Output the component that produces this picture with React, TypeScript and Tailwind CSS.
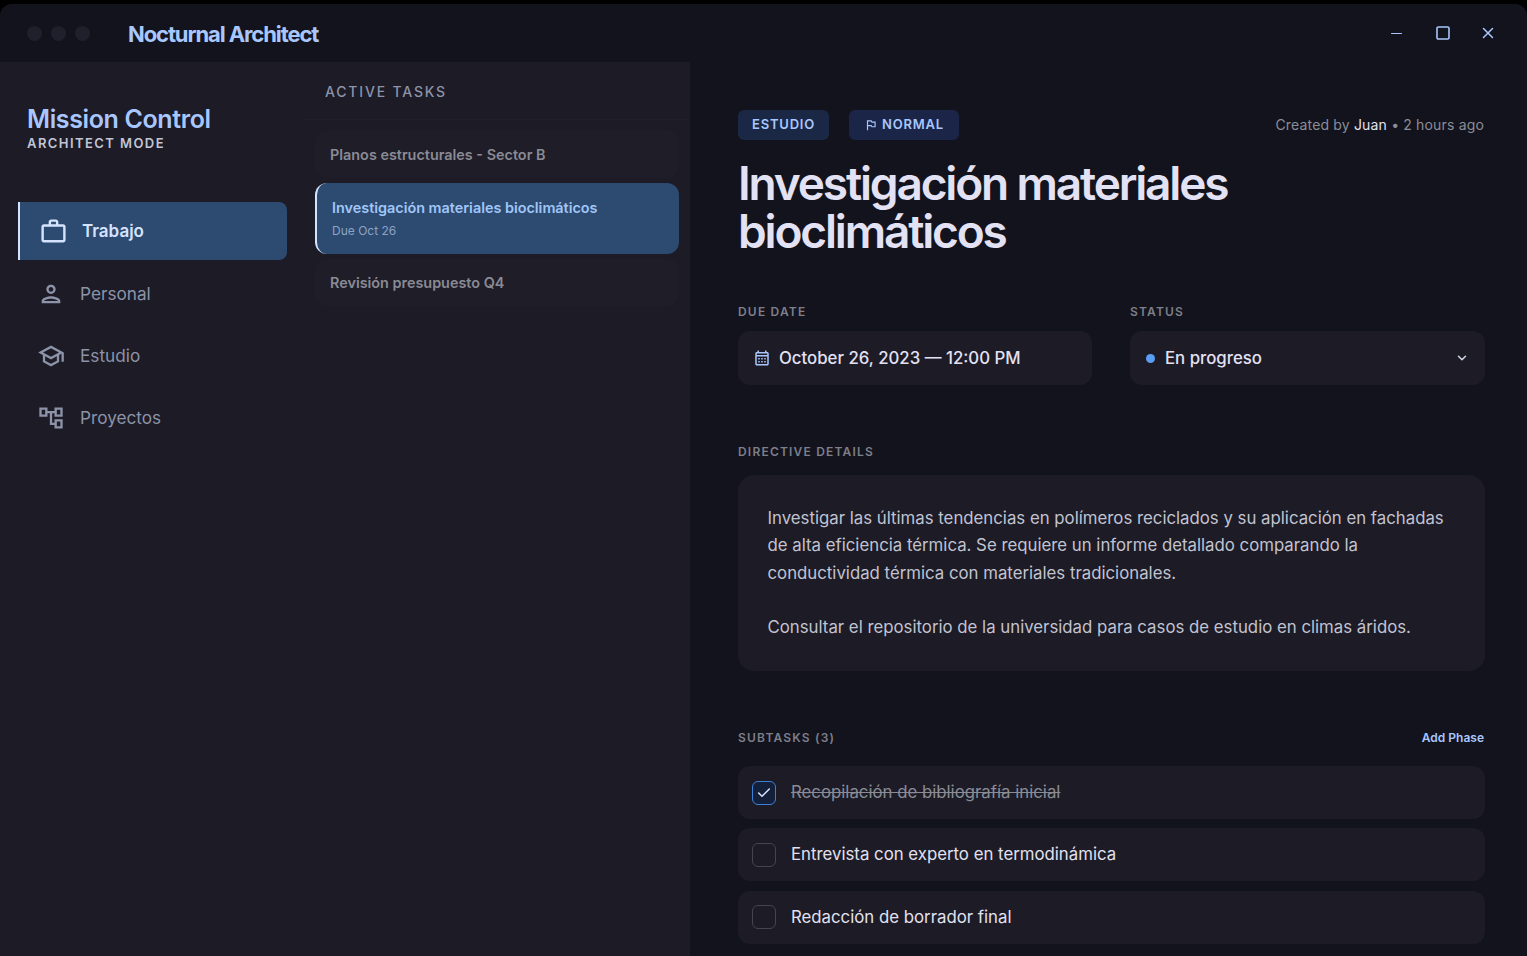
import { Check, ChevronDown, Minus, Square, X } from "lucide-react";

const inter = { fontFamily: "Inter, sans-serif" };

function Glyph({ d, className }: { d: string; className: string }) {
    return (
        <svg className={className} viewBox="0 0 24 24" fill="currentColor">
            <path d={d} />
        </svg>
    );
}

const workPath = "M20 6h-4V4c0-1.11-.89-2-2-2h-4c-1.11 0-2 .89-2 2v2H4c-1.11 0-1.99.89-1.99 2L2 19c0 1.11.89 2 2 2h16c1.11 0 2-.89 2-2V8c0-1.11-.89-2-2-2zm-6 0h-4V4h4v2zm6 13H4V8h16v11z";
const personPath = "M12 6c1.1 0 2 .9 2 2s-.9 2-2 2-2-.9-2-2 .9-2 2-2m0 10c2.7 0 5.8 1.29 6 2H6c.23-.72 3.31-2 6-2m0-12C9.79 4 8 5.79 8 8s1.79 4 4 4 4-1.79 4-4-1.79-4-4-4zm0 10c-2.67 0-8 1.34-8 4v2h16v-2c0-2.66-5.33-4-8-4z";
const schoolPath = "M12 3 1 9l4 2.18v6L12 21l7-3.82v-6l2-1.09V17h2V9L12 3zm6.82 6L12 12.72 5.18 9 12 5.28 18.82 9zM17 15.99l-5 2.73-5-2.73v-3.72L12 15l5-2.73v3.72z";
const treePath = "M22 11V3h-7v3H9V3H2v8h7V8h2v10h4v3h7v-8h-7v3h-2V8h2v3h7zM7 9H4V5h3v4zm10 6h3v4h-3v-4zm0-10h3v4h-3V5z";
const flagPath = "M14 6l-1-2H5v17h2v-7h5l1 2h7V6h-6zm4 8h-4l-1-2H7V6h5l1 2h5v6z";
const calendarPath = "M19 4h-1V2h-2v2H8V2H6v2H5c-1.11 0-1.99.9-1.99 2L3 20c0 1.1.89 2 2 2h14c1.1 0 2-.9 2-2V6c0-1.1-.9-2-2-2zm0 16H5V10h14v10zm0-12H5V6h14v2zM9 14H7v-2h2v2zm4 0h-2v-2h2v2zm4 0h-2v-2h2v2zm-8 4H7v-2h2v2zm4 0h-2v-2h2v2zm4 0h-2v-2h2v2z";

function NavItem({ path, label }: { path: string; label: string }) {
    return (
        <div className="h-[62px] flex items-center gap-[15px] pl-[19px] text-[#8d93a8]">
            <Glyph d={path} className="w-7 h-7" />
            <span className="text-[17.2px] font-normal">{label}</span>
        </div>
    );
}

function Subtask({ label, done }: { label: string; done?: boolean }) {
    return (
        <div className="h-[53px] flex items-center gap-[15px] px-[14px] rounded-xl bg-[#1c1b26]">
            <span className={`w-6 h-6 rounded-md border flex items-center justify-center ${done ? "border-[#3b82d6] bg-[#14203a]" : "border-[#44454f]"}`}>
                {done && <Check className="w-4 h-4 text-[#dbe6ff]" strokeWidth={2.2} />}
            </span>
            <span className={`text-[16.8px] ${done ? "line-through text-[#8b8b96]" : "text-[#e3e1f0]"}`}>{label}</span>
        </div>
    );
}

export default function App() {
    return (
        <div className="h-[956px] bg-black pt-1 overflow-hidden" style={inter}>
            <div className="h-full rounded-t-xl overflow-hidden flex flex-col bg-[#12131c]">

                {/* Title bar */}
                <header className="h-[58px] shrink-0 flex items-center pl-[27px] pr-[29px] bg-[#12131c]">
                    <div className="flex gap-[9px]">
                        <span className="w-[15px] h-[15px] rounded-full bg-[#1f202b]" />
                        <span className="w-[15px] h-[15px] rounded-full bg-[#1f202b]" />
                        <span className="w-[15px] h-[15px] rounded-full bg-[#1f202b]" />
                    </div>
                    <h1 className="ml-[38px] mt-[2px] text-[22px] font-bold tracking-[-0.05em] text-[#a9c7ff]">Nocturnal Architect</h1>
                    <div className="ml-auto flex items-center gap-[26px] text-[#a9c7ff]">
                        <span className="w-5 flex justify-center"><Minus className="w-[17px] h-[17px]" strokeWidth={1.5} /></span>
                        <span className="w-5 flex justify-center translate-x-px"><Square className="w-4 h-4" strokeWidth={2.4} /></span>
                        <span className="w-5 flex justify-center"><X className="w-[18px] h-[18px]" strokeWidth={2} /></span>
                    </div>
                </header>

                <div className="flex-1 flex min-h-0">

                    {/* Sidebar */}
                    <aside className="w-[305px] shrink-0 bg-[#1c1b26] pt-[42px]">
                        <div className="pl-[27px]">
                            <h2 className="text-[25px] leading-[30px] font-semibold tracking-[-0.015em] text-[#a9c7ff]">Mission Control</h2>
                            <p className="mt-px text-[13px] leading-4 font-semibold tracking-[0.11em] text-[#c2c5d6]">ARCHITECT MODE</p>
                        </div>
                        <nav className="mt-[51px] mx-[18px]">
                            <div className="h-[58px] flex items-center gap-[14px] pl-[19px] border-l-2 border-[#d6e3ff] rounded-r-lg bg-[#2d4b71] text-[#d6e3ff] mb-[3px]">
                                <Glyph d={workPath} className="w-[29px] h-[29px]" />
                                <span className="pt-[2px] text-[17px] font-semibold">Trabajo</span>
                            </div>
                            <NavItem path={personPath} label="Personal" />
                            <NavItem path={schoolPath} label="Estudio" />
                            <NavItem path={treePath} label="Proyectos" />
                        </nav>
                    </aside>

                    {/* Task list */}
                    <section className="w-[385px] shrink-0 bg-[#1c1b26]">
                        <div className="h-[58px] flex items-center pl-5 pt-[2px] border-b border-[#20202b]">
                            <h3 className="text-[14px] font-medium tracking-[0.13em] text-[#8d93a8]">ACTIVE TASKS</h3>
                        </div>
                        <div className="pt-[10px] pl-[10px] pr-[11px] flex flex-col gap-[5px]">
                            <div className="h-[48px] flex items-center px-[15px] pt-[2px] rounded-xl bg-[#1e1d28] text-[14.4px] font-semibold text-[#8a8a94]">
                                Planos estructurales - Sector B
                            </div>
                            <div className="h-[71px] flex flex-col justify-center gap-[5px] pl-[15px] rounded-xl border-l-2 border-[#d6e3ff] bg-[#2d4b71]">
                                <span className="text-[14.4px] leading-5 font-semibold text-[#a0c6f8]">Investigación materiales bioclimáticos</span>
                                <span className="text-[12px] leading-4 text-[#8ba3c4]">Due Oct 26</span>
                            </div>
                            <div className="h-[47px] flex items-center px-[15px] rounded-xl bg-[#1e1d28] text-[14.4px] font-semibold text-[#8a8a94]">
                                Revisión presupuesto Q4
                            </div>
                        </div>
                    </section>

                    {/* Task detail */}
                    <main className="flex-1 min-w-0 pt-[48px] pl-[48px] pr-[42px] bg-[#12131c]">
                        <div className="flex items-center">
                            <span className="h-[30px] w-[91px] flex items-center justify-center rounded-md bg-[#1a2845] text-[13px] font-semibold tracking-[0.06em] text-[#a9c7ff]">ESTUDIO</span>
                            <span className="h-[30px] w-[110px] ml-5 flex items-center justify-center gap-1 rounded-md bg-[#1a2548] text-[13px] font-semibold tracking-[0.06em] text-[#a9c7ff]">
                                <Glyph d={flagPath} className="w-3.5 h-3.5" />
                                NORMAL
                            </span>
                            <span className="ml-auto pb-[2px] pr-px text-[14px] text-[#8b8d98] tracking-[0.012em]">
                                Created by <span className="text-[#e3e1f0]">Juan</span> • 2 hours ago
                            </span>
                        </div>

                        <h1 className="mt-[19px] text-[46px] leading-[48px] font-semibold tracking-[-0.047em] text-[#e3e1f4] max-w-[600px]">
                            Investigación materiales bioclimáticos
                        </h1>

                        <div className="mt-[49px] grid grid-cols-[354px_355px] gap-[38px]">
                            <div>
                                <p className="text-[12px] leading-4 font-semibold tracking-[0.1em] text-[#7e7f8a]">DUE DATE</p>
                                <div className="mt-[11px] h-[54px] flex items-center gap-2 px-[15px] rounded-xl bg-[#1c1b26]">
                                    <Glyph d={calendarPath} className="w-[18px] h-[18px] text-[#a9c7ff]" />
                                    <span className="pt-[2px] text-[16.8px] font-medium text-[#e3e1f4]">October 26, 2023 — 12:00 PM</span>
                                </div>
                            </div>
                            <div>
                                <p className="text-[12px] leading-4 font-semibold tracking-[0.1em] text-[#7e7f8a]">STATUS</p>
                                <div className="mt-[11px] h-[54px] flex items-center px-4 rounded-xl bg-[#1c1b26]">
                                    <span className="w-[9px] h-[9px] rounded-full bg-[#5b9df5]" />
                                    <span className="ml-[10px] pt-[2px] text-[16.8px] font-medium text-[#e3e1f4]">En progreso</span>
                                    <ChevronDown className="ml-auto w-[14px] h-[14px] text-[#d0d4e4]" strokeWidth={2.6} />
                                </div>
                            </div>
                        </div>

                        <p className="mt-[59px] text-[12px] leading-4 font-semibold tracking-[0.1em] text-[#7e7f8a]">DIRECTIVE DETAILS</p>
                        <div className="mt-[15px] h-[196px] pt-[30px] px-[29.5px] rounded-2xl bg-[#1c1b26] text-[16.8px] leading-[27.4px] text-[#c2c3d0]">
                            <p>Investigar las últimas tendencias en polímeros reciclados y su aplicación en fachadas de alta eficiencia térmica. Se requiere un informe detallado comparando la conductividad térmica con materiales tradicionales.</p>
                            <p className="mt-[27px]">Consultar el repositorio de la universidad para casos de estudio en climas áridos.</p>
                        </div>

                        <div className="mt-[59px] flex items-center justify-between">
                            <p className="text-[12px] leading-4 font-semibold tracking-[0.1em] text-[#7e7f8a]">SUBTASKS (3)</p>
                            <span className="pr-px text-[12px] leading-4 font-semibold text-[#a9c7ff]">Add Phase</span>
                        </div>
                        <div className="mt-5 flex flex-col gap-[9.4px]">
                            <Subtask label="Recopilación de bibliografía inicial" done />
                            <Subtask label="Entrevista con experto en termodinámica" />
                            <Subtask label="Redacción de borrador final" />
                        </div>
                    </main>
                </div>
            </div>
        </div>
    );
}
